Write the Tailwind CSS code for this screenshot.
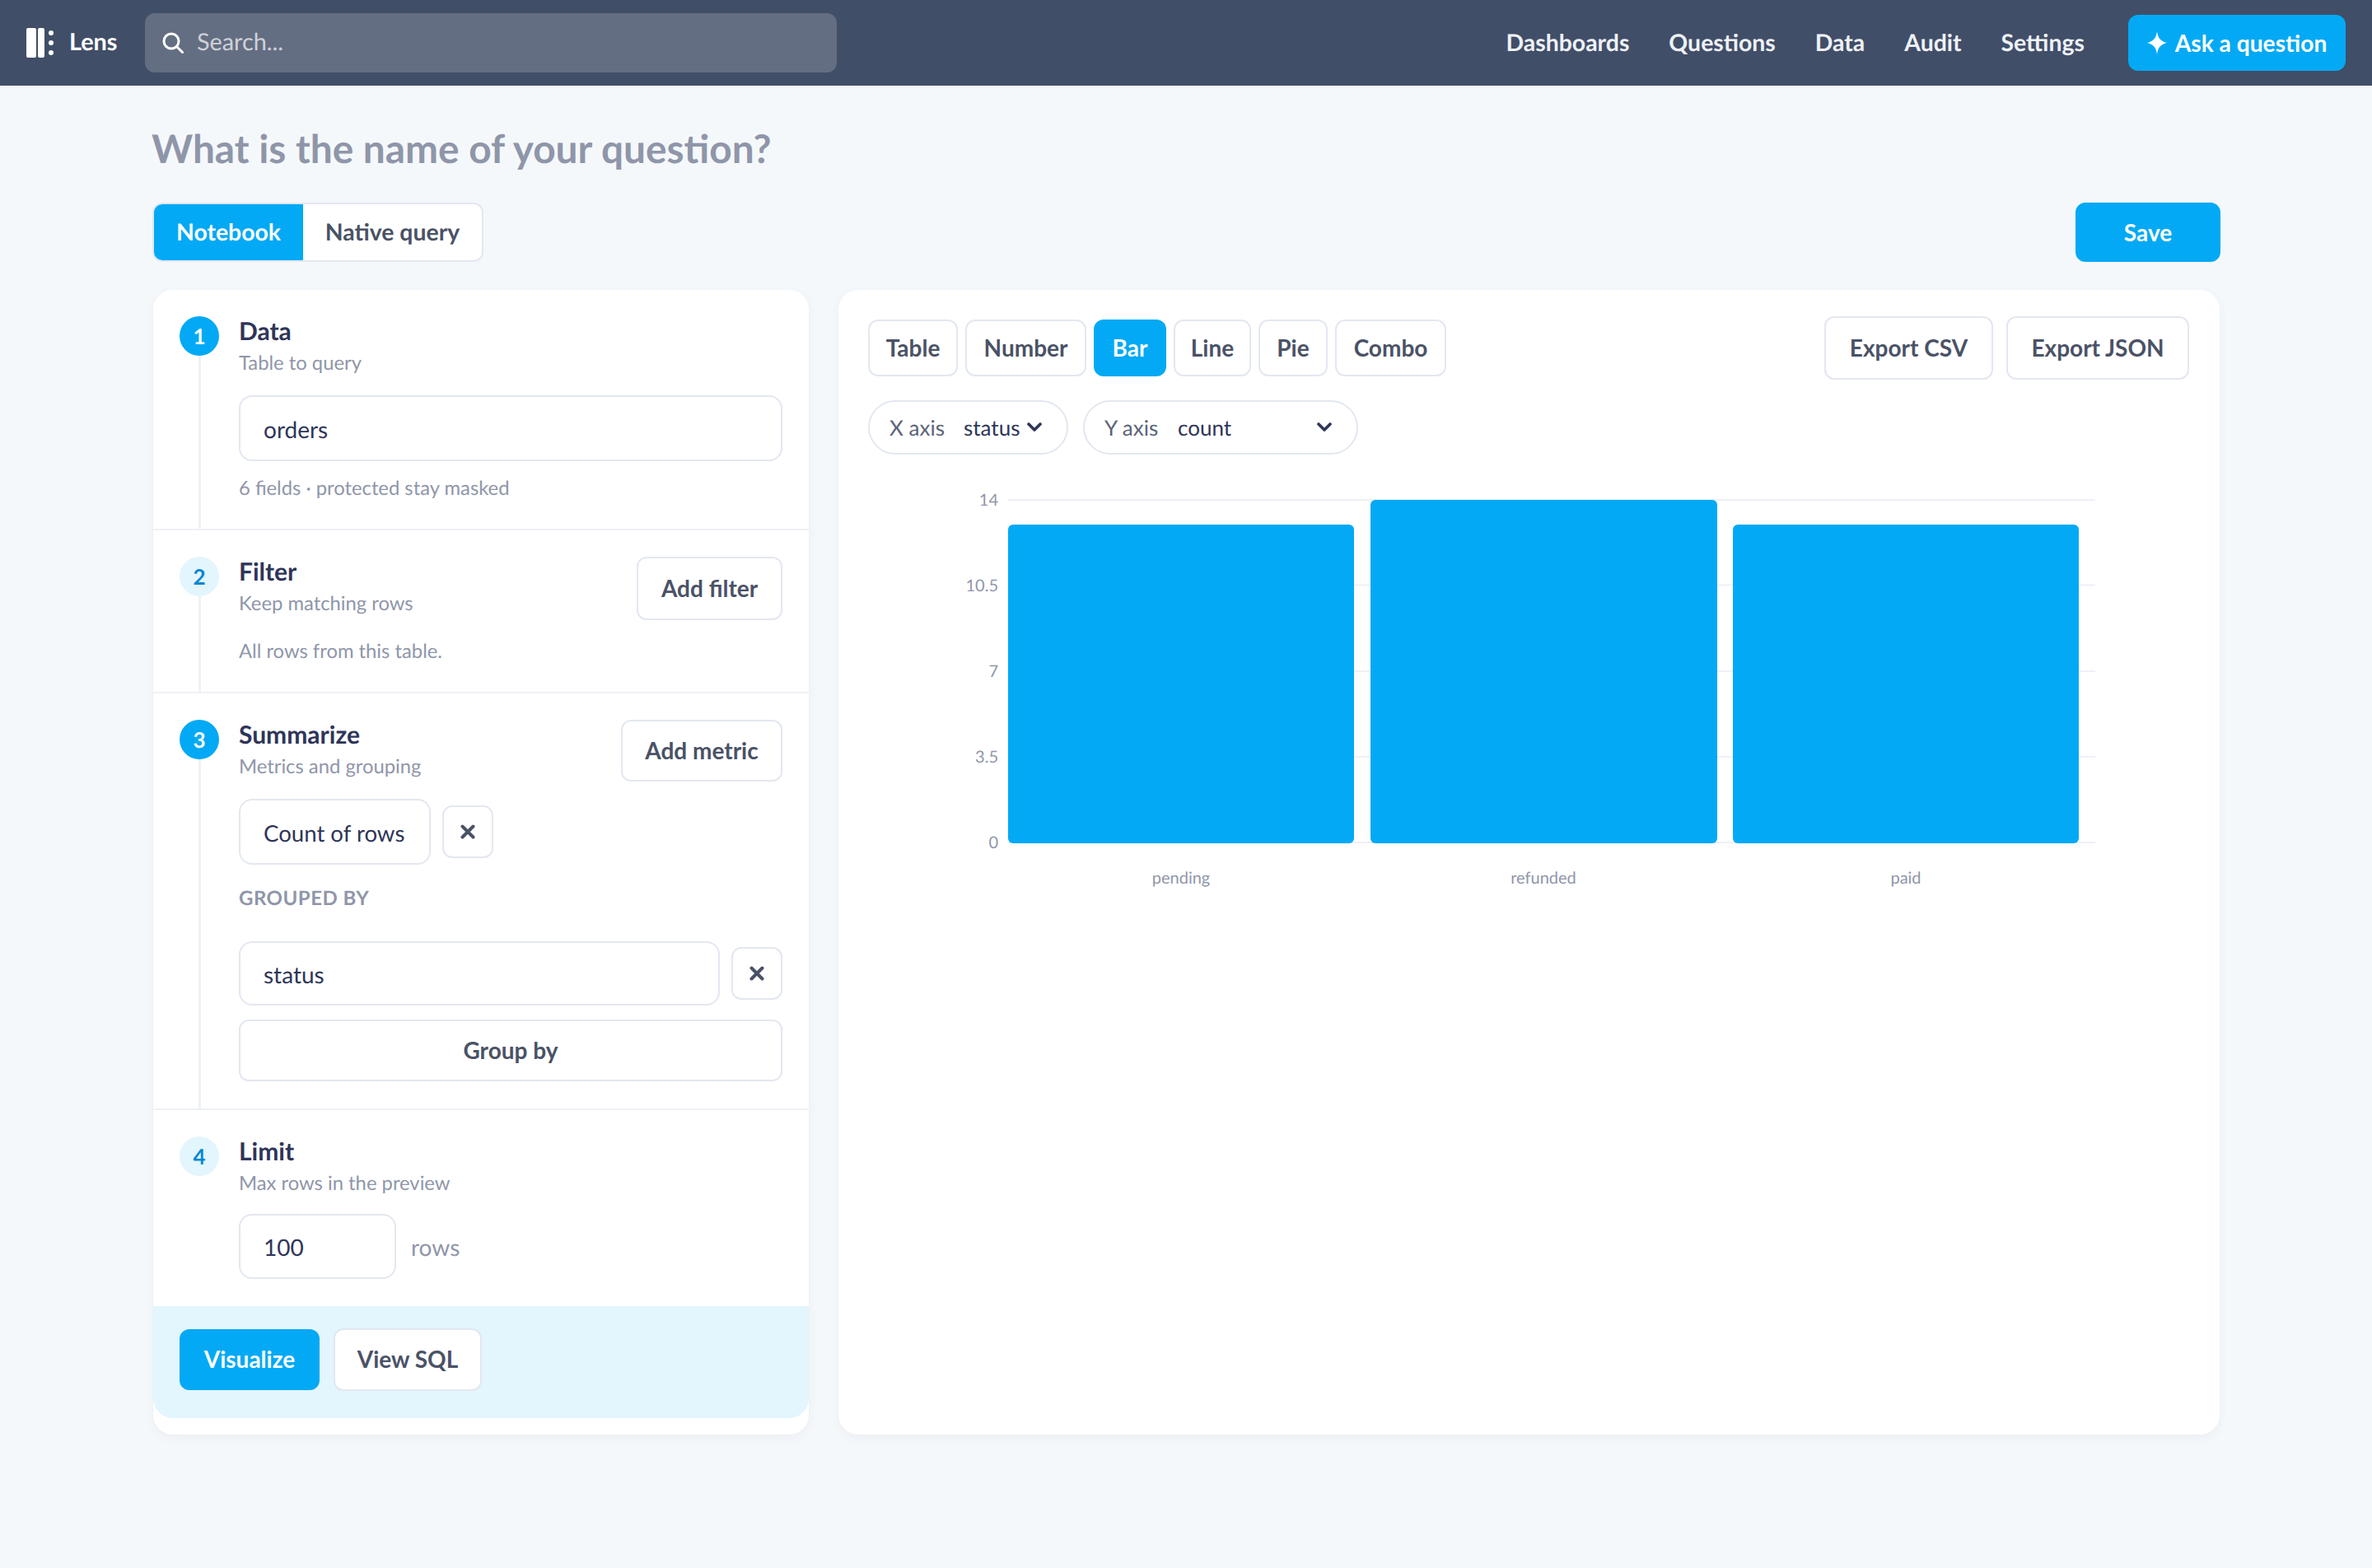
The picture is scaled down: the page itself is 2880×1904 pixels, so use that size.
<!DOCTYPE html>
<html lang="en">
<head>
<meta charset="UTF-8">
<title>Lens</title>
<script src="https://cdn.jsdelivr.net/npm/@tailwindcss/browser@4"></script>
</head>
<body class="bg-[#f5f8fb] font-['Lato',sans-serif] text-[#2e3558] min-h-[1904px] antialiased [text-rendering:geometricPrecision]">
  <!-- top bar -->
  <header class="h-[104px] bg-[#414e68] flex items-center pl-[31px] pr-[32px]">
    <svg class="w-[34px] h-[36px] mr-[19px]" viewBox="0 0 34 36" fill="#fff">
      <rect x="1" y="0" width="12" height="36" rx="2"/>
      <rect x="15" y="0" width="8" height="36" rx="2"/>
      <circle cx="31" cy="6" r="3"/><circle cx="31" cy="18" r="3"/><circle cx="31" cy="30" r="3"/>
    </svg>
    <span class="w-[60px] text-white font-bold text-[28.8px]">Lens</span>
    <div class="ml-[32px] w-[840px] h-[72px] rounded-[12px] bg-[#646e82] flex items-center pl-[21px]">
      <svg class="w-[26px] h-[26px] text-white" viewBox="0 0 26 26" fill="none" stroke="currentColor" stroke-width="3" stroke-linecap="round"><circle cx="11" cy="11" r="9"/><path d="M18 18l6.500 6.500"/></svg>
      <span class="ml-[16px] text-[28.8px] text-white/70">Search...</span>
    </div>
    <nav class="ml-auto flex items-center gap-[48px] text-[28.4px] font-bold text-[#eef1f6]">
      <span>Dashboards</span><span>Questions</span><span>Data</span><span>Audit</span><span>Settings</span>
    </nav>
    <button class="ml-[53px] w-[264px] h-[68px] rounded-[12px] bg-[#03a9f4] text-white text-[28.2px] font-bold flex items-center justify-center gap-[10px]">
      <svg class="w-[24px] h-[28px]" viewBox="0 0 24 28" fill="#fff"><path d="M12 0c1 8 4 12 12 14-8 2-11 6-12 14-1-8-4-12-12-14 8-2 11-6 12-14z"/></svg>
      Ask a question
    </button>
  </header>

  <main class="w-[2512px] ml-[184px]">
    <h1 class="pt-[47px] text-[47.8px] leading-[60px] font-bold text-[#8f96a9]">What is the name of your question?</h1>

    <div class="mt-[35px] flex items-center justify-between">
      <div class="ml-[1px] flex h-[72px] rounded-[12px] border-2 border-[#e3e7f0] bg-white overflow-hidden text-[28.4px] font-bold">
        <span class="w-[181px] bg-[#03a9f4] text-white flex items-center justify-center">Notebook</span>
        <span class="w-[217px] text-[#4a5266] flex items-center justify-center">Native query</span>
      </div>
      <button class="w-[176px] h-[72px] pb-[1px] rounded-[12px] bg-[#03a9f4] text-white text-[28px] font-bold">Save</button>
    </div>

    <div class="mt-[34px] flex gap-[36px] h-[1390px]">
      <!-- steps -->
      <section class="ml-[2px] w-[796px] bg-white rounded-[24px] shadow-[0_4px_12px_rgba(46,53,88,0.05)] flex flex-col">
        <div class="relative h-[292px] border-b-2 border-[#eef1f6] pt-[32px] pl-[32px] pr-[32px] flex gap-[24px] shrink-0">
          <div class="absolute left-[55px] top-[80px] bottom-0 w-[3px] bg-[#eef1f6]"></div>
          <div class="w-[48px] h-[48px] rounded-full bg-[#03a9f4] text-white font-bold text-[26px] flex items-center justify-center shrink-0">1</div>
          <div class="flex-1">
            <h2 class="text-[30px] leading-[36px] font-bold">Data</h2>
            <p class="text-[23.8px] leading-[32px] text-[#8f96a9] mt-[5px]">Table to query</p>
            <div class="mt-[23px] h-[80px] rounded-[16px] border-2 border-[#e3e7f0] flex items-center pl-[28px] pt-[2px] text-[28px]">orders</div>
            <p class="mt-[16px] text-[23.8px] leading-[34px] text-[#8f96a9]">6 fields · protected stay masked</p>
          </div>
        </div>

        <div class="relative h-[198px] border-b-2 border-[#eef1f6] pt-[32px] pl-[32px] pr-[32px] flex gap-[24px] shrink-0">
          <div class="absolute left-[55px] top-[80px] bottom-0 w-[3px] bg-[#eef1f6]"></div>
          <div class="w-[48px] h-[48px] rounded-full bg-[#e3f5fd] text-[#0288d1] font-bold text-[26px] flex items-center justify-center shrink-0">2</div>
          <div class="flex-1">
            <div class="flex justify-between items-start">
              <div>
                <h2 class="text-[30px] leading-[36px] font-bold">Filter</h2>
                <p class="text-[23.8px] leading-[32px] text-[#8f96a9] mt-[5px]">Keep matching rows</p>
              </div>
              <button class="w-[177px] h-[77px] pb-[2px] rounded-[12px] border-2 border-[#e3e7f0] text-[28px] font-bold text-[#4a5266]">Add filter</button>
            </div>
            <p class="mt-[21px] text-[23.8px] leading-[34px] text-[#8f96a9]">All rows from this table.</p>
          </div>
        </div>

        <div class="relative h-[506px] border-b-2 border-[#eef1f6] pt-[32px] pl-[32px] pr-[32px] flex gap-[24px] shrink-0">
          <div class="absolute left-[55px] top-[80px] bottom-0 w-[3px] bg-[#eef1f6]"></div>
          <div class="w-[48px] h-[48px] rounded-full bg-[#03a9f4] text-white font-bold text-[26px] flex items-center justify-center shrink-0">3</div>
          <div class="flex-1">
            <div class="flex justify-between items-start">
              <div>
                <h2 class="text-[30px] leading-[36px] font-bold">Summarize</h2>
                <p class="text-[23.8px] leading-[32px] text-[#8f96a9] mt-[5px]">Metrics and grouping</p>
              </div>
              <button class="w-[196px] h-[75px] pb-[2px] rounded-[12px] border-2 border-[#e3e7f0] text-[28px] font-bold text-[#4a5266]">Add metric</button>
            </div>
            <div class="mt-[21px] flex items-center gap-[14px]">
              <div class="w-[233px] h-[80px] rounded-[16px] border-2 border-[#e3e7f0] flex items-center pl-[28px] pt-[3px] text-[27.6px]">Count of rows</div>
              <button class="w-[62px] h-[64px] rounded-[12px] border-2 border-[#e3e7f0] flex items-center justify-center">
                <svg class="w-[18px] h-[18px]" viewBox="0 0 18 18" stroke="#4a5266" stroke-width="4" stroke-linecap="round"><path d="M2.500 2.500l13 13M15.500 2.500l-13 13"/></svg>
              </button>
            </div>
            <p class="mt-[24px] text-[24px] leading-[34px] font-bold text-[#8f96a9] tracking-[0.5px]">GROUPED BY</p>
            <div class="mt-[35px] flex items-center gap-[14px]">
              <div class="flex-1 h-[78px] rounded-[16px] border-2 border-[#e3e7f0] flex items-center pl-[28px] pt-[2px] text-[28px]">status</div>
              <button class="w-[62px] h-[64px] rounded-[12px] border-2 border-[#e3e7f0] flex items-center justify-center">
                <svg class="w-[18px] h-[18px]" viewBox="0 0 18 18" stroke="#4a5266" stroke-width="4" stroke-linecap="round"><path d="M2.500 2.500l13 13M15.500 2.500l-13 13"/></svg>
              </button>
            </div>
            <button class="mt-[17px] w-full h-[75px] pb-[1px] rounded-[12px] border-2 border-[#e3e7f0] text-[28px] font-bold text-[#4a5266]">Group by</button>
          </div>
        </div>

        <div class="h-[238px] pt-[32px] pl-[32px] pr-[32px] flex gap-[24px] shrink-0">
          <div class="w-[48px] h-[48px] rounded-full bg-[#e3f5fd] text-[#0288d1] font-bold text-[26px] flex items-center justify-center shrink-0">4</div>
          <div class="flex-1">
            <h2 class="text-[30px] leading-[36px] font-bold">Limit</h2>
            <p class="text-[23.8px] leading-[32px] text-[#8f96a9] mt-[5px]">Max rows in the preview</p>
            <div class="mt-[21px] flex items-center gap-[18px]">
              <div class="w-[191px] h-[79px] rounded-[16px] border-2 border-[#e3e7f0] flex items-center pl-[28px] text-[28px]">100</div>
              <span class="text-[28px] text-[#8f96a9]">rows</span>
            </div>
          </div>
        </div>

        <div class="h-[136px] bg-[#e3f5fd] rounded-b-[24px] pl-[32px] pt-[27px] flex items-start gap-[17px] shrink-0">
          <button class="mt-[1px] w-[170px] h-[74px] pb-[2px] rounded-[12px] bg-[#03a9f4] text-white text-[28px] font-bold">Visualize</button>
          <button class="w-[180px] h-[76px] pb-[2px] rounded-[12px] border-2 border-[#e3e7f0] bg-white text-[28px] font-bold text-[#4a5266]">View SQL</button>
        </div>
      </section>

      <!-- result -->
      <section class="w-[1677px] bg-white rounded-[24px] shadow-[0_4px_12px_rgba(46,53,88,0.05)] pl-[36px] pr-[37px] pt-[32px]">
        <div class="flex items-center justify-between">
          <div class="flex gap-[9px] text-[28px] font-bold text-[#4a5266]">
            <button class="w-[109px] h-[69px] pb-[2px] rounded-[12px] border-2 border-[#e3e7f0]">Table</button>
            <button class="w-[147px] h-[69px] pb-[2px] rounded-[12px] border-2 border-[#e3e7f0]">Number</button>
            <button class="w-[88px] h-[69px] pb-[2px] rounded-[12px] bg-[#03a9f4] text-white">Bar</button>
            <button class="w-[94px] h-[69px] pb-[2px] rounded-[12px] border-2 border-[#e3e7f0]">Line</button>
            <button class="w-[84px] h-[69px] pb-[2px] rounded-[12px] border-2 border-[#e3e7f0]">Pie</button>
            <button class="w-[135px] h-[69px] pb-[2px] rounded-[12px] border-2 border-[#e3e7f0]">Combo</button>
          </div>
          <div class="flex gap-[16px] text-[28px] font-bold text-[#4a5266]">
            <button class="w-[205px] h-[77px] pb-[2px] rounded-[12px] border-2 border-[#e3e7f0]">Export CSV</button>
            <button class="w-[222px] h-[77px] pb-[2px] rounded-[12px] border-2 border-[#e3e7f0]">Export JSON</button>
          </div>
        </div>
        <div class="mt-[25px] flex gap-[18px] text-[26px]">
          <div class="w-[243px] h-[66px] rounded-full border-2 border-[#e3e7f0] flex items-center pl-[24px]">
            <span class="text-[#5b6378] w-[90px]">X axis</span><span>status</span>
            <svg class="ml-[9px] w-[18px] h-[12px]" viewBox="0 0 18 12" fill="none" stroke="#2e3558" stroke-width="3.6" stroke-linecap="round" stroke-linejoin="round"><path d="M2 2l7 7 7-7"/></svg>
          </div>
          <div class="w-[334px] h-[66px] rounded-full border-2 border-[#e3e7f0] flex items-center pl-[24px]">
            <span class="text-[#5b6378] w-[89px]">Y axis</span><span>count</span>
            <svg class="ml-auto mr-[30px] w-[18px] h-[12px]" viewBox="0 0 18 12" fill="none" stroke="#2e3558" stroke-width="3.6" stroke-linecap="round" stroke-linejoin="round"><path d="M2 2l7 7 7-7"/></svg>
          </div>
        </div>
        <!-- chart: svg spans x 1140..2560, y 590..1090 on the page -->
        <svg class="mt-[38px] block ml-[86px]" width="1420" height="500" viewBox="0 0 1420 500" font-size="20" fill="#8f96a9">
          <g stroke="#eef1f6" stroke-width="2">
            <line x1="84" x2="1404" y1="17" y2="17"/><line x1="84" x2="1404" y1="120.500" y2="120.500"/><line x1="84" x2="1404" y1="225" y2="225"/><line x1="84" x2="1404" y1="329" y2="329"/><line x1="84" x2="1404" y1="433" y2="433"/>
          </g>
          <g fill="#03a9f4">
            <rect x="84" y="47" width="420" height="387" rx="6"/>
            <rect x="524" y="17" width="421" height="417" rx="6"/>
            <rect x="964" y="47" width="420" height="387" rx="6"/>
          </g>
          <g text-anchor="end">
            <text x="72" y="24">14</text><text x="72" y="128">10.5</text><text x="72" y="232">7</text><text x="72" y="336">3.5</text><text x="72" y="440">0</text>
          </g>
          <g text-anchor="middle">
            <text x="294" y="483">pending</text><text x="734" y="483">refunded</text><text x="1174" y="483">paid</text>
          </g>
        </svg>
      </section>
    </div>
  </main>
</body>
</html>
